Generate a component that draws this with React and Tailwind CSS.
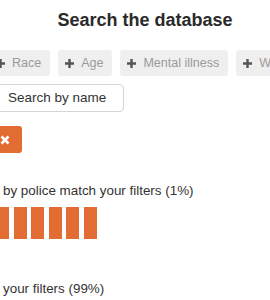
const filters = ["Race", "Age", "Mental illness", "Weapon"];

const Plus = () => (
  <svg width="9" height="9" viewBox="0 0 9 9" className="shrink-0">
    <path d="M3.3 0h2.4v3.3H9v2.4H5.7V9H3.3V5.7H0V3.3h3.3z" fill="#555" />
  </svg>
);

const App = () => {
  return (
    <div className="w-[270px] h-[300px] overflow-hidden bg-white text-[#333] font-['Liberation_Sans',sans-serif]">
      <h1 className="pt-[10px] pl-[20px] text-center text-[18px] font-bold leading-[20px] text-[#2a2a2a]">
        Search the database
      </h1>
      <div className="mt-[20px] ml-[-11px] flex gap-[8px] whitespace-nowrap">
        {filters.map((f) => (
          <div
            key={f}
            className="h-[26px] flex items-center gap-[7px] pl-[7px] pr-[9px] rounded-[3px] bg-[#efefef] text-[12.5px] text-[#9a9a9a]"
          >
            <Plus />
            {f}
          </div>
        ))}
      </div>
      <div className="mt-[8px] ml-[-4px] w-[128px] h-[28px] flex items-center pl-[11px] border border-[#d5d5d5] rounded-[4px] text-[13.5px] text-[#333]">
        Search by name
      </div>
      <div className="mt-[14px] ml-[-8px] w-[30px] h-[27px] rounded-[3px] bg-[#e36c32] flex items-center justify-end pr-[12px]">
        <svg width="10" height="10" viewBox="0 0 10 10">
          <path d="M1.5 1.5l7 7M8.5 1.5l-7 7" stroke="#fff" strokeWidth="2.6" />
        </svg>
      </div>
      <p className="mt-[30px] pl-[3px] text-[13.4px] leading-[16px]">
        by police match your filters (1%)
      </p>
      <div className="mt-[8px] ml-[-4px] flex gap-[4.5px]">
        {[0, 1, 2, 3, 4, 5].map((i) => (
          <div key={i} className="w-[13px] h-[32px] bg-[#e36c32]" />
        ))}
      </div>
      <p className="mt-[42px] pl-[3px] text-[13.4px] leading-[16px]">
        your filters (99%)
      </p>
    </div>
  );
};

export default App;
